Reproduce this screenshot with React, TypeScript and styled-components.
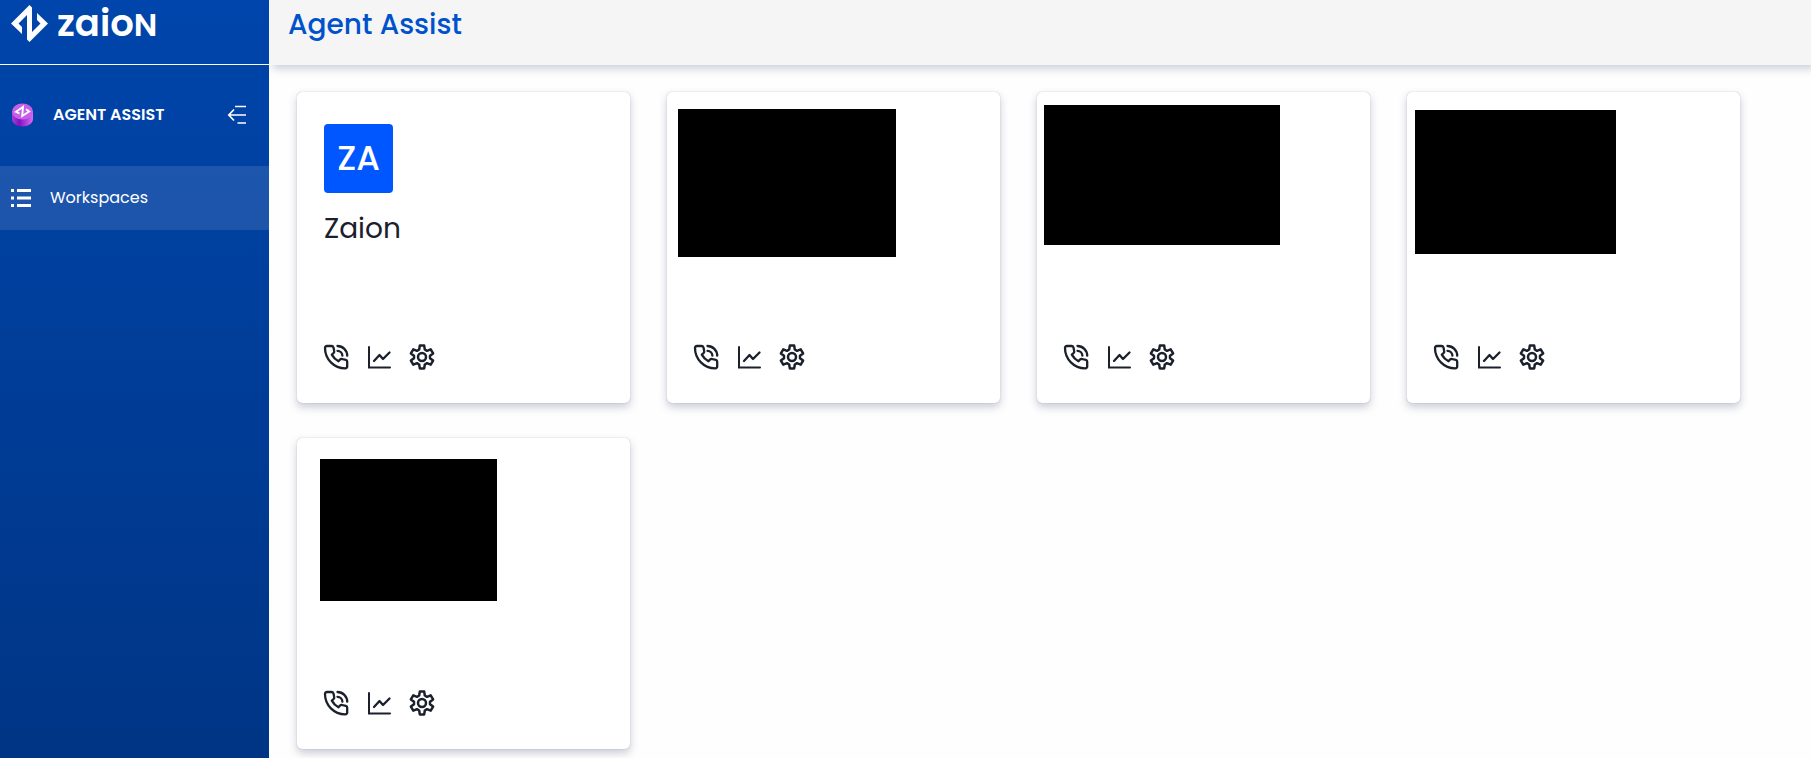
import React from "react";
import styled, { createGlobalStyle } from "styled-components";

const GlobalStyle = createGlobalStyle`
  * { box-sizing: border-box; }
  body {
    margin: 0;
    background: #fefefe;
    color: #1a202c;
    font-family: Poppins, Inter, "Open Sans", sans-serif;
  }
  h1, h2, ul { margin: 0; padding: 0; }
  svg { display: block; flex: none; }
`;

const Shell = styled.div`
  display: flex;
  min-height: 100vh;
`;

const Sidebar = styled.aside`
  flex: none;
  width: 269px;
  background: linear-gradient(180deg, #0045ab 0%, #003585 100%);
  color: #fff;
`;

const Brand = styled.a`
  display: flex;
  align-items: flex-start;
  gap: 8px;
  height: 65px;
  padding: 5px 11px 0;
  border-bottom: 1px solid #fff;
  color: #fff;
  text-decoration: none;
`;

const Wordmark = styled.span`
  font-size: 37px;
  font-weight: 600;
  line-height: 36px;
`;

const WordmarkCap = styled.span`
  font-size: 32px;
`;

const ProductRow = styled.div`
  display: flex;
  align-items: center;
  height: 101px;
  padding: 0 22px 2px 11px;
`;

const ProductName = styled.span`
  flex: 1;
  margin-left: 19px;
  font-size: 16px;
  font-weight: 600;
  line-height: 24px;
`;

const IconButton = styled.button`
  display: flex;
  padding: 0;
  border: 0;
  background: none;
  color: inherit;
  cursor: pointer;
`;

const NavLink = styled.a`
  display: flex;
  align-items: center;
  gap: 19px;
  height: 64px;
  padding: 0 11px;
  background: rgba(255, 255, 255, 0.11);
  color: #fff;
  font-size: 16px;
  font-weight: 400;
  line-height: 24px;
  text-decoration: none;
`;

const Page = styled.div`
  flex: 1;
  min-width: 0;
`;

const Header = styled.header`
  height: 65px;
  padding: 8px 19px;
  background: #f5f5f5;
  box-shadow: 4px 4px 8px rgba(60, 80, 120, 0.26);
`;

const PageTitle = styled.h1`
  color: #0052cc;
  font-size: 28px;
  font-weight: 500;
  line-height: 34px;
`;

const CardGrid = styled.main`
  display: grid;
  grid-template-columns: repeat(4, 1fr);
  gap: 35px 37px;
  padding: 27px 71px 8px 28px;
`;

const Card = styled.article`
  display: flex;
  flex-direction: column;
  height: 311px;
  border-radius: 5px;
  background: #fff;
  box-shadow: 0 0 1px rgba(40, 50, 90, 0.4), 0 4px 8px rgba(60, 70, 110, 0.28);
`;

const Identity = styled.div`
  padding: 32px 27px 0;
`;

const Avatar = styled.div`
  display: flex;
  align-items: center;
  justify-content: center;
  width: 69px;
  height: 69px;
  border-radius: 4px;
  background: #0057ff;
  color: #fff;
  font-size: 34px;
  font-weight: 500;
`;

const CardTitle = styled.h2`
  margin-top: 18px;
  font-size: 28px;
  font-weight: 400;
  line-height: 36px;
`;

const HiddenBlock = styled.div<{ $w: number; $h: number; $top: number; $left: number }>`
  width: ${(p) => p.$w}px;
  height: ${(p) => p.$h}px;
  margin: ${(p) => p.$top}px 0 0 ${(p) => p.$left}px;
  background: #000;
`;

const Actions = styled.div`
  display: flex;
  gap: 17px;
  margin-top: auto;
  padding: 0 26px 33px;
`;

const BrandMark = () => (
  <svg width="38" height="38" viewBox="0 0 38 38" fill="#fff" aria-hidden="true">
    <path d="M18.5 0 L21 2.5 V27 L29.5 18.5 L26 15 V8 L37 18.5 L18.5 37 L16 34.5 V10 L7.5 18.5 L11 22 V29 L0 18.5 Z" />
  </svg>
);

const ProductIcon = () => (
  <svg width="23" height="24" viewBox="0 0 23 24" aria-hidden="true">
    <defs>
      <linearGradient id="side" x1="0" x2="1" y1="0" y2="0">
        <stop offset="0" stopColor="#a73fd8" />
        <stop offset="0.35" stopColor="#8410c4" />
        <stop offset="1" stopColor="#dc6bf0" />
      </linearGradient>
    </defs>
    <path d="M1 8 H22 V16 C22 20.500 17 23.500 11.500 23.500 S1 20.500 1 16 Z" fill="url(#side)" />
    <ellipse cx="11.500" cy="8.500" rx="10.500" ry="8" fill="#c561e6" />
    <path d="M8.500 10.500 L5 8.800 L12 4 L11.200 13 L18.200 8.500 L15 6.200" fill="none" stroke="#fff" strokeWidth="1.900" />
  </svg>
);

const CollapseIcon = () => (
  <svg width="20" height="20" viewBox="0 0 20 20" fill="none" stroke="#fff" strokeWidth="1.700" aria-hidden="true">
    <path d="M8 1.500 H19 M2 10 H19 M10.500 18 H19 M7 4.500 L1.800 10 L7 15.500" />
  </svg>
);

const ListIcon = () => (
  <svg width="20" height="20" viewBox="0 0 20 20" fill="#fff" aria-hidden="true">
    <path d="M0 1h3v3H0z M6 1h14v3H6z M0 8.500h3v3H0z M6 8.500h14v3H6z M0 16h3v3H0z M6 16h14v3H6z" />
  </svg>
);

const iconProps = {
  width: 26,
  height: 26,
  viewBox: "0 0 26 26",
  fill: "none",
  stroke: "currentColor",
  strokeWidth: 2.3,
  strokeLinecap: "round" as const,
  strokeLinejoin: "round" as const,
  "aria-hidden": true,
};

const PhoneIcon = () => (
  <svg {...iconProps}>
    <path d="M4 2 H8.500 Q10 2 10.500 3.500 L11.200 7 Q11.500 8.300 10.500 9.200 L8.800 10.600 Q11.200 15 15.500 17.300 L17 15.600 Q17.800 14.800 19 15 L22.800 15.900 Q24.200 16.300 24.200 17.800 V22.300 Q24.200 24.300 22.200 24.300 C11 24.300 2 15.200 2 4 Q2 2 4 2 Z" />
    <path d="M14.500 2 A9.700 9.700 0 0 1 24.200 11.700" />
    <path d="M14.500 6.800 A5 5 0 0 1 19.400 11.700" />
  </svg>
);

const ChartIcon = () => (
  <svg {...iconProps}>
    <path d="M3 3 V23.500 H24" strokeLinejoin="miter" strokeWidth={2} />
    <path d="M8 17 L13.500 11 L17 15 L23.500 8.500" />
  </svg>
);

const GearIcon = () => (
  <svg {...iconProps} strokeWidth={2.5}>
    <path d="M10.800 1.600 H15.200 L15.800 5.500 L18 6.800 L21.700 5.300 L24.100 9.400 L21 11.800 V14.200 L24.100 16.600 L21.700 20.700 L18 19.200 L15.800 20.500 L15.200 24.400 H10.800 L10.200 20.500 L8 19.200 L4.300 20.700 L1.900 16.600 L5 14.200 V11.800 L1.900 9.400 L4.300 5.300 L8 6.800 L10.200 5.500 Z" />
    <circle cx="13" cy="13" r="4" />
  </svg>
);

const CardActions = () => (
  <Actions>
    <IconButton type="button" aria-label="Calls"><PhoneIcon /></IconButton>
    <IconButton type="button" aria-label="Statistics"><ChartIcon /></IconButton>
    <IconButton type="button" aria-label="Settings"><GearIcon /></IconButton>
  </Actions>
);

const hiddenWorkspaces = [
  { w: 218, h: 148, top: 17, left: 11 },
  { w: 236, h: 140, top: 13, left: 7 },
  { w: 201, h: 144, top: 18, left: 8 },
  { w: 177, h: 142, top: 21, left: 23 },
];

export default function App() {
  return (
    <>
      <GlobalStyle />
      <Shell>
        <Sidebar>
          <Brand href="#">
            <BrandMark />
            <Wordmark>zaio<WordmarkCap>N</WordmarkCap></Wordmark>
          </Brand>
          <ProductRow>
            <ProductIcon />
            <ProductName>AGENT ASSIST</ProductName>
            <IconButton type="button" aria-label="Collapse menu"><CollapseIcon /></IconButton>
          </ProductRow>
          <nav>
            <NavLink href="#workspaces"><ListIcon />Workspaces</NavLink>
          </nav>
        </Sidebar>
        <Page>
          <Header>
            <PageTitle>Agent Assist</PageTitle>
          </Header>
          <CardGrid>
            <Card>
              <Identity>
                <Avatar>ZA</Avatar>
                <CardTitle>Zaion</CardTitle>
              </Identity>
              <CardActions />
            </Card>
            {hiddenWorkspaces.map((b, i) => (
              <Card key={i}>
                <HiddenBlock $w={b.w} $h={b.h} $top={b.top} $left={b.left} />
                <CardActions />
              </Card>
            ))}
          </CardGrid>
        </Page>
      </Shell>
    </>
  );
}
